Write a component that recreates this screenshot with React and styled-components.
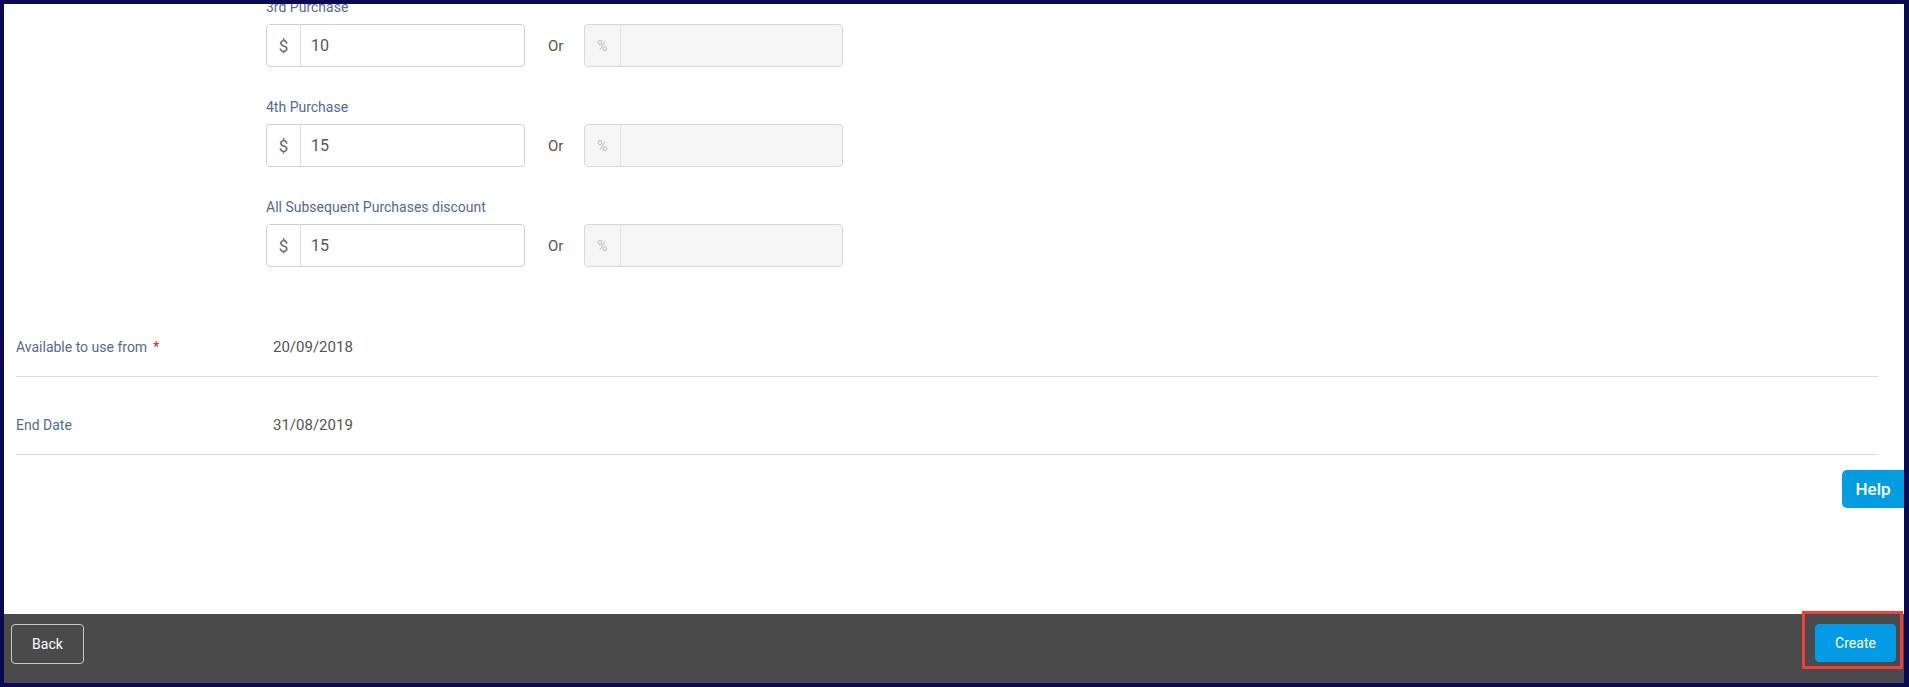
import styled, { createGlobalStyle } from "styled-components";

const GlobalStyle = createGlobalStyle`
  * { box-sizing: border-box; }
  html, body { margin: 0; padding: 0; background: #0a0a52; }
  body { font-family: Roboto, "Liberation Sans", Arial, sans-serif; }
`;

const Frame = styled.div`
  height: 687px;
  border-style: solid;
  border-color: #0a0a52;
  border-width: 4px 5px 4px 4px;
  display: flex;
  flex-direction: column;
  background: #fff;
`;

const Content = styled.div`
  position: relative;
  flex: 1;
  overflow: hidden;
  background: #fff;
`;

/* page is scrolled a little: first label sits under the top edge */
const Scrolled = styled.div`
  margin-top: -5px;
  padding: 0 26px 0 12px;
`;

const Discounts = styled.div`
  padding-left: 250px;
  display: flex;
  flex-direction: column;
  gap: 32px;
`;

const Field = styled.div`
  display: flex;
  flex-direction: column;
  gap: 8px;
`;

const Label = styled.div`
  font-size: 14px;
  line-height: 17px;
  color: #56698f;
`;

const InputRow = styled.div`
  display: flex;
  align-items: center;
`;

const InputGroup = styled.div`
  width: 259px;
  height: 43px;
  display: flex;
  border: 1px solid ${(p) => (p.$disabled ? "#d8d8d8" : "#cfcfcf")};
  border-radius: 4px;
  background: ${(p) => (p.$disabled ? "#f5f5f5" : "#fff")};
`;

const Addon = styled.div`
  width: ${(p) => (p.$wide ? "36px" : "34px")};
  display: flex;
  align-items: center;
  justify-content: center;
  border-right: 1px solid ${(p) => (p.$disabled ? "#e4e4e4" : "#dcdcdc")};
  font-size: ${(p) => (p.$disabled ? "14px" : "17px")};
  color: ${(p) => (p.$disabled ? "#bdbdbd" : "#666")};
`;

const Value = styled.div`
  flex: 1;
  display: flex;
  align-items: center;
  padding-left: 10px;
  font-size: 16px;
  color: #555;
`;

const Or = styled.div`
  width: 59px;
  padding-left: 23px;
  font-size: 15px;
  color: #555;
`;

const DateList = styled.div`
  margin-top: 32px;
`;

const DateRow = styled.div`
  display: flex;
  align-items: center;
  height: 78px;
  padding-top: 18px;
  border-bottom: 1px solid #dadada;
`;

const DateLabel = styled.div`
  width: 257px;
  font-size: 14px;
  color: #56698f;
`;

const Required = styled.span`
  color: #e0192a;
  margin-left: 6px;
`;

const DateValue = styled.div`
  font-size: 15px;
  color: #555;
`;

const HelpTab = styled.button`
  position: absolute;
  right: 0;
  top: 466px;
  width: 62px;
  height: 38px;
  border: none;
  border-radius: 5px 0 0 5px;
  background: #059ddf;
  color: #fff;
  font-family: inherit;
  font-size: 17px;
  font-weight: 500;
`;

const Footer = styled.div`
  position: relative;
  height: 69px;
  flex-shrink: 0;
  background: #4a4a4a;
  display: flex;
  justify-content: space-between;
  align-items: flex-start;
  padding: 10px 8px 0 7px;
`;

const FooterButton = styled.button`
  height: ${(p) => (p.$primary ? "38px" : "40px")};
  width: ${(p) => (p.$primary ? "81px" : "73px")};
  border-radius: 4px;
  border: 1px solid ${(p) => (p.$primary ? "#039be5" : "#c9c9c9")};
  background: ${(p) => (p.$primary ? "#039be5" : "transparent")};
  color: #fff;
  font-family: inherit;
  font-size: 14px;
`;

const Highlight = styled.div`
  position: absolute;
  right: 1px;
  top: -3px;
  width: 101px;
  height: 58px;
  border: 3px solid #ef4040;
  pointer-events: none;
`;

const purchases = [
  { label: "3rd Purchase", amount: "10" },
  { label: "4th Purchase", amount: "15" },
  { label: "All Subsequent Purchases discount", amount: "15" },
];

const dates = [
  { label: "Available to use from", value: "20/09/2018", required: true },
  { label: "End Date", value: "31/08/2019" },
];

export default function App() {
  return (
    <>
      <GlobalStyle />
      <Frame>
        <Content>
          <Scrolled>
            <Discounts>
              {purchases.map((p) => (
                <Field key={p.label}>
                  <Label>{p.label}</Label>
                  <InputRow>
                    <InputGroup>
                      <Addon>$</Addon>
                      <Value>{p.amount}</Value>
                    </InputGroup>
                    <Or>Or</Or>
                    <InputGroup $disabled>
                      <Addon $disabled $wide>%</Addon>
                      <Value />
                    </InputGroup>
                  </InputRow>
                </Field>
              ))}
            </Discounts>
            <DateList>
              {dates.map((d) => (
                <DateRow key={d.label}>
                  <DateLabel>
                    {d.label}
                    {d.required && <Required>*</Required>}
                  </DateLabel>
                  <DateValue>{d.value}</DateValue>
                </DateRow>
              ))}
            </DateList>
          </Scrolled>
          <HelpTab>Help</HelpTab>
        </Content>
        <Footer>
          <FooterButton>Back</FooterButton>
          <FooterButton $primary>Create</FooterButton>
          <Highlight />
        </Footer>
      </Frame>
    </>
  );
}
